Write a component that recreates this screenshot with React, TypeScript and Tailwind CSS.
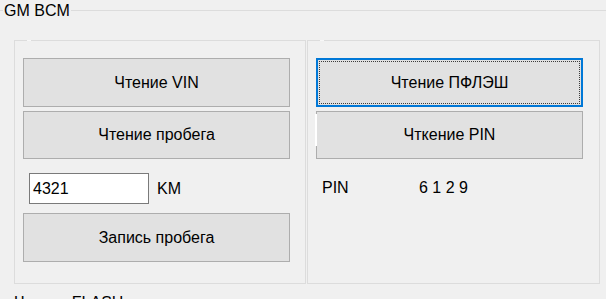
import React from "react";

// WinForms-style button
function WinButton({
  label,
  focused = false,
  className = "",
  children,
}: {
  label: string;
  focused?: boolean;
  className?: string;
  children?: React.ReactNode;
}) {
  return (
    <button
      className={`relative flex w-[267px] items-center justify-center bg-[#e1e1e1] text-black ${
        focused ? "border-2 border-[#0078d7]" : "border border-[#adadad]"
      } ${className}`}
    >
      {focused && (
        <span className="pointer-events-none absolute inset-[1px] border border-dotted border-[#3c3c3c]" />
      )}
      {children}
      <span className="leading-[16px]">{label}</span>
    </button>
  );
}

// group box with empty caption
function Panel({ children, className = "" }: { children: React.ReactNode; className?: string }) {
  return (
    <div className={`relative h-[244px] border border-[#dcdcdc] ${className}`}>
      <span className="absolute -top-px left-[12px] h-px w-[4px] bg-[#f7f7f7]" />
      {children}
    </div>
  );
}

export default function App() {
  return (
    <div className="h-[299px] w-[606px] overflow-hidden bg-[#f0f0f0] font-['Liberation_Sans',Arial,sans-serif] text-[16px] leading-[16px] text-black">
      {/* GM BCM header */}
      <div className="flex h-[40px] items-start">
        <div className="mt-[10px] w-[3px] border-t border-[#dcdcdc]" />
        <span className="mt-[3px] px-[1px]">GM BCM</span>
        <div className="mt-[10px] flex-1 border-t border-[#dcdcdc]" />
      </div>

      <div className="flex gap-[1px] pl-[14px]">
        {/* left */}
        <Panel className="w-[292px]">
          <div className="flex flex-col pl-[8px] pt-[17px]">
            <WinButton label="Чтение VIN" className="h-[49px]" />
            <WinButton label="Чтение пробега" className="mt-[4px] h-[48px]" />
            <div className="mt-[14px] flex items-center">
              <div className="ml-[6px] flex h-[31px] w-[120px] items-center border border-[#7a7a7a] bg-white pl-[3px]">
                4321
              </div>
              <span className="ml-[8px]">KM</span>
            </div>
            <WinButton label="Запись пробега" className="mt-[9px] h-[49px]" />
          </div>
        </Panel>

        {/* right */}
        <Panel className="w-[293px]">
          <div className="flex flex-col pl-[8px] pt-[17px]">
            <WinButton label="Чтение ПФЛЭШ" focused className="h-[49px]" />
            <WinButton label="Чткение PIN" className="mt-[4px] h-[48px]">
              <span className="absolute -left-[2px] top-[2px] h-[32px] w-[2px] bg-white" />
            </WinButton>
            <div className="mt-[21px] flex pl-[6px]">
              <span className="w-[97px]">PIN</span>
              <span>6 1 2 9</span>
            </div>
          </div>
        </Panel>
      </div>

      <div className="mt-[11px] pl-[14px]">Чтение FLASH</div>
    </div>
  );
}
